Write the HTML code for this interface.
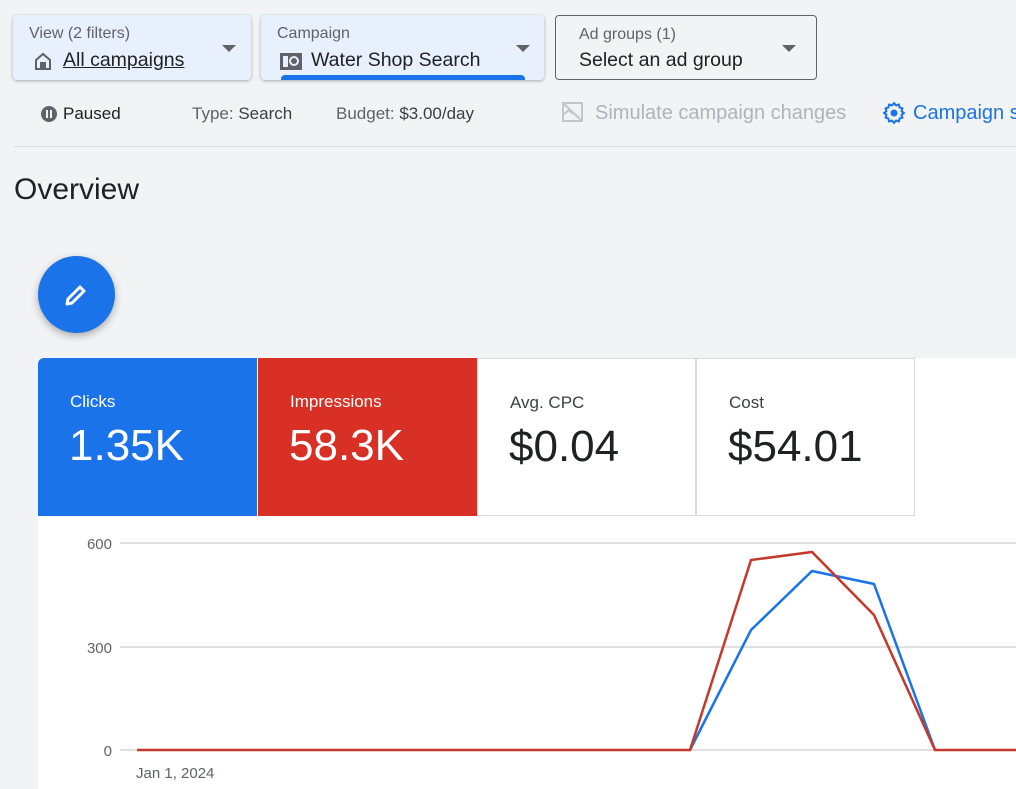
<!DOCTYPE html>
<html><head><style>
body{margin:0;width:1016px;height:789px;background:#f1f3f4;font-family:"Liberation Sans",sans-serif;position:relative;overflow:hidden;color:#3c4043}
.a{position:absolute}
.dd{position:absolute;top:15px;height:65px;border-radius:4px;background:#e8f0fe;box-shadow:0 1px 3px rgba(0,0,0,.3);box-sizing:border-box}
.lbl{position:absolute;left:16px;top:10px;font-size:16px;color:#5f6368}
.val{position:absolute;top:34px;font-size:19.5px;color:#202124}
.tri{position:absolute;top:30px;width:0;height:0;border-left:7px solid transparent;border-right:7px solid transparent;border-top:7px solid #5f6368}
.tile{position:absolute;top:358px;height:158px;width:219px;box-sizing:border-box}
.tile .t{position:absolute;left:32px;top:34px;font-size:17px}
.tile .n{position:absolute;left:31px;top:63px;font-size:44px}
</style></head><body>
<div class="dd" style="left:13px;width:238px">
 <div class="lbl">View (2 filters)</div>
 <svg class="a" style="left:20px;top:37px" width="20" height="18" viewBox="0 0 20 18"><path d="M3 8 L10 2 L17 8 V17 H3 Z" fill="none" stroke="#5f6368" stroke-width="2"/><rect x="7" y="10" width="6" height="7" fill="#5f6368"/></svg>
 <div class="val" style="left:50px;text-decoration:underline">All campaigns</div>
 <div class="tri" style="left:209px"></div>
</div>
<div class="dd" style="left:261px;width:283px;overflow:hidden">
 <div class="lbl">Campaign</div>
 <svg class="a" style="left:19px;top:38px" width="22" height="17" viewBox="0 0 22 17"><rect x="0" y="0" width="22" height="17" fill="#5f6368"/><rect x="3" y="3" width="5" height="11" fill="#e8f0fe"/><circle cx="14" cy="8" r="4" fill="none" stroke="#e8f0fe" stroke-width="2"/></svg>
 <div class="val" style="left:50px">Water Shop Search</div>
 <div class="tri" style="left:255px"></div>
 <div class="a" style="left:20px;top:60px;width:244px;height:8px;background:#1a73e8;border-radius:4px 4px 0 0"></div>
</div>
<div class="dd" style="left:555px;width:262px;background:#f1f3f4;border:1px solid #5f6368;box-shadow:none">
 <div class="lbl" style="left:23px;top:10px">Ad groups (1)</div>
 <div class="val" style="left:23px;top:33px">Select an ad group</div>
 <div class="tri" style="left:226px;top:29px"></div>
</div>
<div class="a" style="left:41px;top:106px;width:16px;height:16px;border-radius:50%;background:#5f6368"></div>
<div class="a" style="left:46px;top:110px;width:2px;height:8px;background:#f1f3f4"></div><div class="a" style="left:50px;top:110px;width:2px;height:8px;background:#f1f3f4"></div>
<div class="a" style="left:63px;top:104px;font-size:17px;color:#202124">Paused</div>
<div class="a" style="left:192px;top:104px;font-size:17px"><span style="color:#5f6368">Type:</span> Search</div>
<div class="a" style="left:336px;top:104px;font-size:17px"><span style="color:#5f6368">Budget:</span> $3.00/day</div>
<svg class="a" style="left:561px;top:101px" width="24" height="22" viewBox="0 0 24 22"><rect x="2" y="2" width="19" height="18" fill="none" stroke="#c4c7c5" stroke-width="2"/><path d="M2 2 L21 20 M2 14 L8 9 L12 13" fill="none" stroke="#c4c7c5" stroke-width="2"/></svg>
<div class="a" style="left:595px;top:102px;font-size:20px;color:#b0b3b8">Simulate campaign changes</div>
<svg class="a" style="left:882px;top:101px" width="24" height="24" viewBox="0 0 24 24"><path d="M12 2 l2 2.5 3-1 .5 3 3 .8-1 3 2.5 1.7-2.5 1.7 1 3-3 .8-.5 3-3-1L12 22l-2-2.5-3 1-.5-3-3-.8 1-3L2 12l2.5-1.7-1-3 3-.8.5-3 3 1z" fill="none" stroke="#1a73e8" stroke-width="2" stroke-linejoin="round"/><circle cx="12" cy="12" r="3.5" fill="#1a73e8"/></svg>
<div class="a" style="left:913px;top:102px;width:103px;overflow:hidden;font-size:20px;color:#1a73e8;white-space:nowrap">Campaign settings</div>
<div class="a" style="left:14px;top:146px;width:1002px;height:1px;background:#dadce0"></div>
<div class="a" style="left:14px;top:173px;font-size:30px;color:#202124">Overview</div>
<div class="a" style="left:38px;top:256px;width:77px;height:77px;border-radius:50%;background:#1a73e8;box-shadow:0 3px 8px rgba(0,0,0,.3)"></div>
<svg class="a" style="left:62px;top:281px" width="28" height="28" viewBox="0 0 28 28"><path d="M5 23 L6 18 L18 6 L22 10 L10 22 Z" fill="none" stroke="#fff" stroke-width="3" stroke-linejoin="round"/></svg>
<div class="a" style="left:38px;top:358px;width:978px;height:431px;background:#fff;border-radius:6px 0 0 0"></div>
<div class="tile" style="left:38px;background:#1a73e8;color:#fff;border-radius:6px 0 0 0"><div class="t">Clicks</div><div class="n">1.35K</div></div>
<div class="tile" style="left:258px;background:#d93025;color:#fff"><div class="t">Impressions</div><div class="n">58.3K</div></div>
<div class="tile" style="left:477px;border:1px solid #dadce0;color:#202124"><div class="t" style="color:#3c4043">Avg. CPC</div><div class="n">$0.04</div></div>
<div class="tile" style="left:696px;border:1px solid #dadce0;color:#202124"><div class="t" style="color:#3c4043">Cost</div><div class="n">$54.01</div></div>
<svg class="a" style="left:0;top:0" width="1016" height="789">
<g stroke="#e0e0e0" stroke-width="2"><line x1="120" y1="543" x2="1016" y2="543"/><line x1="120" y1="647" x2="1016" y2="647"/><line x1="120" y1="750" x2="1016" y2="750"/></g>
<g font-size="15" fill="#5f6368" font-family="Liberation Sans" text-anchor="end"><text x="112" y="549">600</text><text x="112" y="653">300</text><text x="112" y="756">0</text></g>
<text x="136" y="778" font-size="15" fill="#5f6368" font-family="Liberation Sans">Jan 1, 2024</text>
<polyline points="690,750 751,630 812,571 874,584 935,750" fill="none" stroke="#1a73e8" stroke-width="2.5"/>
<polyline points="137,750 690,750 751,560 812,552 874,615 935,750 1016,750" fill="none" stroke="#c5392b" stroke-width="2.5"/>
</svg>
</body></html>
